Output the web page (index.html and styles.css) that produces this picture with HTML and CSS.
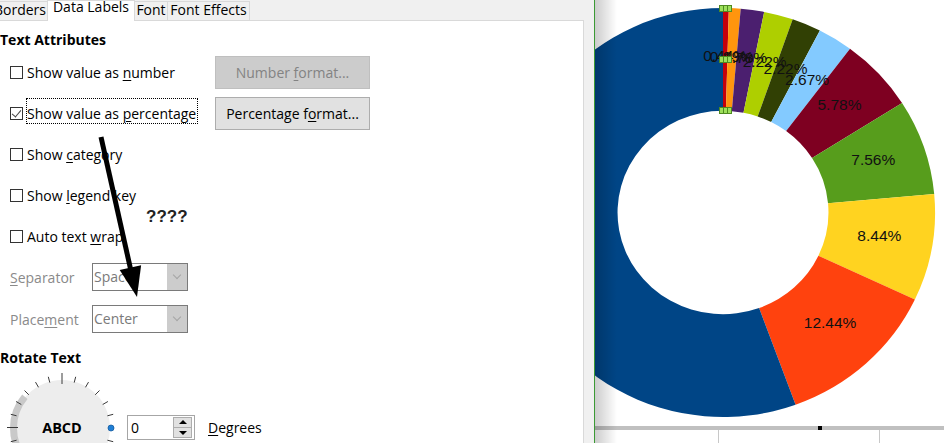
FILE: index.html
```html
<!DOCTYPE html>
<html lang="en">

<head>
  <meta charset="UTF-8">
  <meta name="viewport" content="width=device-width, initial-scale=1.0">
  <title>Data Labels</title>
  <link rel="stylesheet" href="styles.css">
</head>

<body>
  <div class="screen">
    <div class="dialog">
      <div class="tabs">
        <div class="tab tab-borders">Borders</div>
        <div class="tab tab-labels active">Data Labels</div>
        <div class="tab tab-font">Font</div>
        <div class="tab tab-effects">Font Effects</div>
      </div>

      <div class="panel">
        <div class="section-title">Text Attributes</div>

        <div class="attrs">
          <label class="check"><span class="box"></span><span class="text">Show value as <u>n</u>umber</span></label>
          <button class="btn" disabled>Number <u>f</u>ormat...</button>

          <label class="check"><span class="box checked"></span><span class="text focus">Show value as <u>p</u>ercentage</span></label>
          <button class="btn">Percentage f<u>o</u>rmat...</button>

          <label class="check"><span class="box"></span><span class="text">Show <u>c</u>ategory</span></label>
          <div></div>

          <label class="check"><span class="box"></span><span class="text">Show <u>l</u>egend key</span></label>
          <div></div>

          <label class="check"><span class="box"></span><span class="text">Auto text <u>w</u>rap</span></label>
          <div></div>
        </div>

        <div class="fields">
          <div class="field">
            <span class="field-label"><u>S</u>eparator</span>
            <div class="select"><span class="select-value">Space</span><span class="select-btn"></span></div>
          </div>
          <div class="field">
            <span class="field-label">Place<u>m</u>ent</span>
            <div class="select"><span class="select-value">Center</span><span class="select-btn"></span></div>
          </div>
        </div>

        <div class="section-title rotate-title">Rotate Text</div>

        <div class="rotate">
          <svg class="dial" width="120" height="75" viewBox="0 0 120 75">
            <circle cx="62" cy="60" r="48" fill="#ededed" />
            <path d="M24.85 28.83 A48.5 48.5 0 0 0 24.85 91.17" fill="none" stroke="#c9c9c9" stroke-width="7" />
            <g stroke="#3a3a3a" stroke-width="1">
              <line x1="107.4" y1="47.8" x2="113.2" y2="46.3" />
              <line x1="102.7" y1="36.5" x2="107.9" y2="33.5" />
              <line x1="95.2" y1="26.8" x2="99.5" y2="22.5" />
              <line x1="85.5" y1="19.3" x2="88.5" y2="14.1" />
              <line x1="74.2" y1="14.6" x2="75.7" y2="8.8" />
              <line x1="62" y1="16" x2="62" y2="5" />
              <line x1="49.8" y1="14.6" x2="48.3" y2="8.8" />
              <line x1="38.5" y1="19.3" x2="35.5" y2="14.1" />
              <line x1="28.8" y1="26.8" x2="24.5" y2="22.5" />
              <line x1="21.3" y1="36.5" x2="16.1" y2="33.5" />
              <line x1="16.6" y1="47.8" x2="10.8" y2="46.3" />
              <line x1="18" y1="59.5" x2="7" y2="59.5" />
              <line x1="16.6" y1="72.2" x2="10.8" y2="73.7" />
              <line x1="107.4" y1="72.2" x2="113.2" y2="73.7" />
            </g>
            <circle cx="111" cy="60" r="3" fill="#1f7fd6" stroke="#145a9e" stroke-width="0.8" />
            <text x="62" y="65" text-anchor="middle" class="dial-text">ABCD</text>
          </svg>

          <div class="spin">
            <span class="spin-value">0</span>
            <span class="spin-btns">
              <span class="spin-up"></span>
              <span class="spin-down"></span>
            </span>
          </div>
          <span class="degrees"><u>D</u>egrees</span>
        </div>
      </div>
    </div>

    <div class="chart">
      <svg id="donut" width="349" height="426" viewBox="0 0 349 426">
        <g class="slices"></g>
        <g class="labels"></g>
        <g class="handles">
          <rect x="124.5" y="5.5" width="4" height="6" />
          <rect x="128.5" y="5.5" width="4" height="6" />
          <rect x="132.5" y="5.5" width="4" height="6" />
          <rect x="124.5" y="56.5" width="4" height="6" />
          <rect x="128.5" y="56.5" width="4" height="6" />
          <rect x="132.5" y="56.5" width="4" height="6" />
          <rect x="124.5" y="107.5" width="4" height="6" />
          <rect x="128.5" y="107.5" width="4" height="6" />
          <rect x="132.5" y="107.5" width="4" height="6" />
        </g>
      </svg>
      <div class="hbar"><span class="marker"></span></div>
      <div class="cells">
        <div class="cell c1"></div>
        <div class="cell c2"></div>
        <div class="cell c3"></div>
      </div>
      <div class="shade"></div>
    </div>

    <div class="question">????</div>
    <svg class="arrow" width="160" height="310" viewBox="0 0 160 310">
      <line x1="101" y1="137" x2="131" y2="271" stroke="#000" stroke-width="5" />
      <polygon points="137,297 119.7,270.1 141.1,265.3" fill="#000" />
    </svg>
  </div>

  <script src="script.js"></script>
</body>

</html>
```

FILE: styles.css
```css
* {
  box-sizing: border-box;
}

body {
  margin: 0;
  padding: 0;
  background: #fff;
  font-family: "Open Sans", sans-serif;
  font-size: 14px;
  color: #000;
}

u {
  text-underline-offset: 2px;
}

.screen {
  position: relative;
  display: flex;
  height: 443px;
  overflow: hidden;
}

.dialog {
  flex-shrink: 0;
  display: flex;
  flex-direction: column;
  width: 607px;
  margin-left: -12px;
  padding-right: 10px;
  background: #f0f0f0;
  border-right: 1px solid #3b9a34;
}

/* tabs */

.tabs {
  display: flex;
  align-items: flex-end;
  height: 20px;
}

.tab {
  height: 19px;
  margin-right: -1px;
  border: 1px solid #d9d9d9;
  border-bottom: 0;
  background: #f0f0f0;
  line-height: 16px;
  text-align: center;
  white-space: nowrap;
}

.tab.active {
  position: relative;
  z-index: 1;
  height: 21px;
  margin-bottom: -1px;
  background: #fff;
  line-height: 12px;
}

.tab-borders {
  width: 60px;
  padding-right: 1px;
  text-align: right;
}

.tab-labels { width: 88px; }
.tab-font { width: 34px; }
.tab-effects { width: 83px; }

/* panel */

.panel {
  flex: 1;
  background: #fff;
  border: 1px solid #d9d9d9;
  padding: 9px 0 0 11px;
}

.section-title {
  height: 20px;
  line-height: 20px;
  font-weight: bold;
}

.attrs {
  display: grid;
  grid-template-columns: 215px 155px;
  grid-auto-rows: 41px;
  align-items: center;
  margin-top: 2px;
}

.check {
  display: flex;
  align-items: center;
  padding-left: 10px;
  line-height: 20px;
  white-space: nowrap;
}

.box {
  position: relative;
  width: 13px;
  height: 13px;
  margin-right: 4px;
  border: 1px solid #333;
  background: #fff;
}

.box.checked::after {
  content: "";
  position: absolute;
  left: 3px;
  top: 0px;
  width: 4px;
  height: 8px;
  border-right: 1px solid #444;
  border-bottom: 1px solid #444;
  transform: rotate(40deg);
}

.focus {
  margin-left: -1px;
  margin-top: -6px;
  padding: 6px 2px 0 1px;
  outline: 1px dotted #000;
  outline-offset: -1px;
}

.btn {
  width: 155px;
  height: 33px;
  padding: 0;
  border: 1px solid #adadad;
  background: #e1e1e1;
  font-family: inherit;
  font-size: 14px;
  color: #000;
}

.btn:disabled {
  border-color: #bfbfbf;
  background: #cccccc;
  color: #838383;
}

/* separator / placement */

.fields {
  display: flex;
  flex-direction: column;
  gap: 14px;
  margin-top: 6px;
}

.field {
  display: flex;
  align-items: center;
  height: 28px;
  padding-left: 10px;
}

.field-label {
  width: 82px;
  color: #8a8a8a;
}

.select {
  display: flex;
  width: 96px;
  height: 28px;
  border: 1px solid #7a7a7a;
  background: #fff;
}

.select-value {
  flex: 1;
  padding-left: 1px;
  line-height: 26px;
  color: #7a7a7a;
}

.select-btn {
  position: relative;
  width: 20px;
  background: #cccccc;
}

.select-btn::after {
  content: "";
  position: absolute;
  left: 7px;
  top: 8px;
  width: 5px;
  height: 5px;
  border-right: 1px solid #a5a5a5;
  border-bottom: 1px solid #a5a5a5;
  transform: rotate(45deg);
}

.rotate-title {
  margin-top: 15px;
}

/* rotate text */

.rotate {
  display: flex;
  align-items: flex-start;
}

.dial {
  flex-shrink: 0;
  display: block;
}

.dial-text {
  font-family: "Open Sans", sans-serif;
  font-weight: bold;
  font-size: 14.5px;
  fill: #000;
}

.spin {
  display: flex;
  align-items: center;
  width: 68px;
  height: 25px;
  margin-top: 47px;
  margin-left: 7px;
  padding: 1px 2px 1px 3px;
  border: 1px solid #a6a6a6;
  background: #fff;
}

.spin-value {
  flex: 1;
  line-height: 20px;
}

.spin-btns {
  display: flex;
  flex-direction: column;
  width: 19px;
  height: 21px;
}

.spin-up,
.spin-down {
  position: relative;
  flex: 1;
  border: 1px solid #adadad;
  background: #e1e1e1;
}

.spin-down {
  margin-top: -1px;
}

.spin-up::after,
.spin-down::after {
  content: "";
  position: absolute;
  left: 5px;
  width: 0;
  height: 0;
  border-left: 4px solid transparent;
  border-right: 4px solid transparent;
}

.spin-up::after {
  top: 2px;
  border-bottom: 4px solid #000;
}

.spin-down::after {
  top: 3px;
  border-top: 4px solid #000;
}

.degrees {
  margin-top: 50px;
  margin-left: 13px;
  line-height: 20px;
}

/* chart */

.chart {
  position: relative;
  flex: 1;
  display: flex;
  flex-direction: column;
  background: #fff;
}

#donut {
  display: block;
  flex-shrink: 0;
}

.labels text {
  font-family: "Liberation Sans", Arial, sans-serif;
  font-size: 15.5px;
  fill: #111;
  text-anchor: middle;
}

.handles rect {
  fill: #9de05b;
  stroke: #4f8a20;
  stroke-width: 1;
}

.hbar {
  position: relative;
  height: 4px;
  background: #c0c0c0;
}

.marker {
  position: absolute;
  left: 223px;
  top: 0;
  width: 4px;
  height: 4px;
  background: #000;
}

.cells {
  display: flex;
  flex: 1;
}

.cell {
  border-right: 1px solid #c8c8c8;
}

.c1 { width: 124px; }
.c2 { width: 161px; }
.c3 { flex: 1; border-right: 0; }

.shade {
  position: absolute;
  left: 0;
  top: 0;
  bottom: 0;
  width: 22px;
  background: linear-gradient(to right, rgba(0, 0, 0, 0.2), rgba(0, 0, 0, 0));
}

/* annotations drawn over the screenshot */

.question {
  position: absolute;
  left: 146px;
  top: 206px;
  font-family: "Liberation Sans", Arial, sans-serif;
  font-weight: bold;
  font-size: 17px;
  line-height: 22px;
  color: #222;
}

.arrow {
  position: absolute;
  left: 0;
  top: 0;
}
```

FILE: script.js
```js
// donut chart: slices clockwise from 12 o'clock
const slices = [
  { value: 0.44, color: '#c5000b' },
  { value: 0.89, color: '#ff950e' },
  { value: 1.78, color: '#4b1f6f' },
  { value: 2.22, color: '#aecf00' },
  { value: 2.22, color: '#314004' },
  { value: 2.67, color: '#83caff' },
  { value: 5.78, color: '#7e0021' },
  { value: 7.56, color: '#579d1c' },
  { value: 8.44, color: '#ffd320' },
  { value: 12.44, color: '#ff420e' },
  { value: 55.56, color: '#004586' }
];

const cx = 128;
const cy = 212.5;
const rOut = 204.5;
const rIn = 101.7;
const sx = 1.037;
const ns = 'http://www.w3.org/2000/svg';

const svg = document.getElementById('donut');
const slicesGroup = svg.querySelector('.slices');
const labelsGroup = svg.querySelector('.labels');

const point = (r, deg) => {
  const a = deg * Math.PI / 180;
  return [cx + r * sx * Math.sin(a), cy - r * Math.cos(a)];
};

let start = 0;
slices.forEach(s => {
  const end = start + s.value * 3.6;
  const large = end - start > 180 ? 1 : 0;
  const [x1, y1] = point(rOut, start);
  const [x2, y2] = point(rOut, end);
  const [x3, y3] = point(rIn, end);
  const [x4, y4] = point(rIn, start);

  const path = document.createElementNS(ns, 'path');
  path.setAttribute('d',
    `M${x1} ${y1} A${rOut * sx} ${rOut} 0 ${large} 1 ${x2} ${y2} ` +
    `L${x3} ${y3} A${rIn * sx} ${rIn} 0 ${large} 0 ${x4} ${y4} Z`);
  path.setAttribute('fill', s.color);
  slicesGroup.appendChild(path);

  const [lx, ly] = point((rOut + rIn) / 2, (start + end) / 2);
  const text = document.createElementNS(ns, 'text');
  text.setAttribute('x', lx);
  text.setAttribute('y', ly + 2);
  text.textContent = s.value.toFixed(2) + '%';
  labelsGroup.appendChild(text);

  start = end;
});
```
